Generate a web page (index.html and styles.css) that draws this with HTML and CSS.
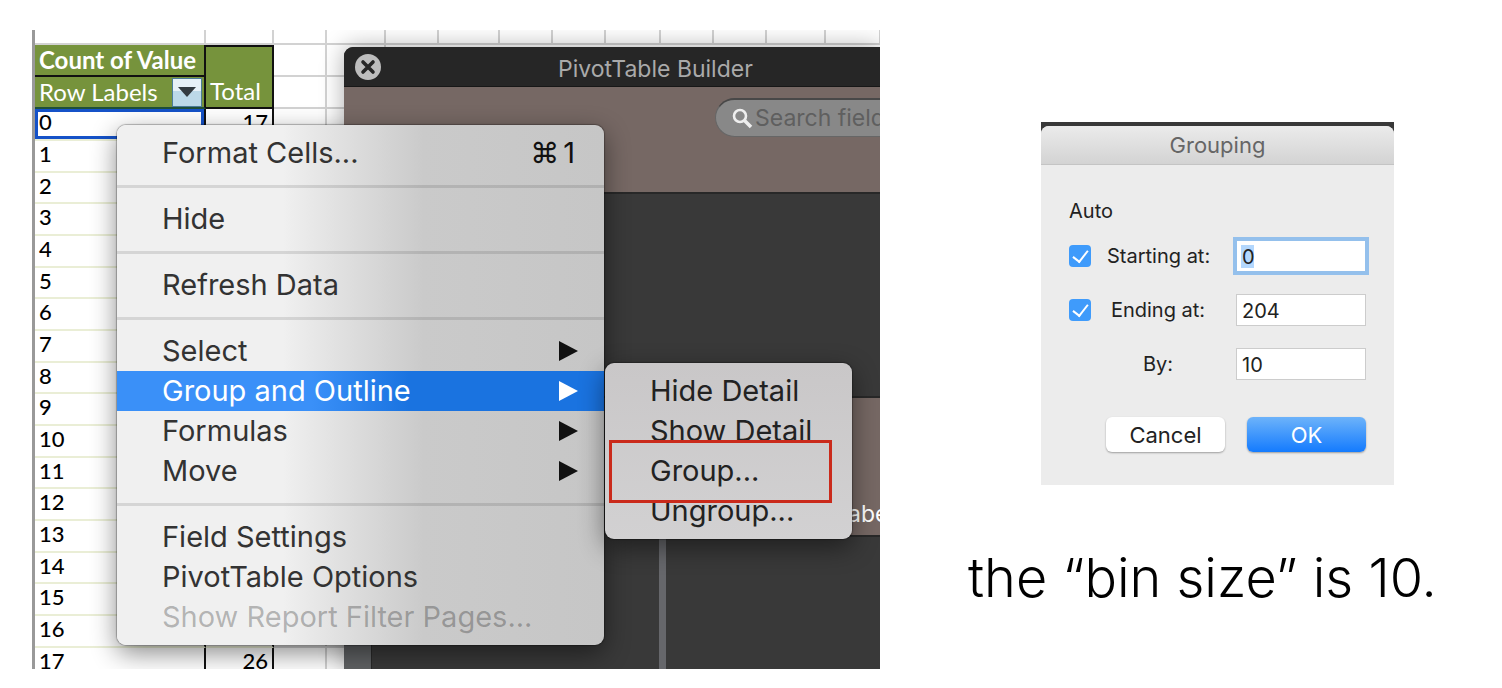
FILE: index.html
```html
<!DOCTYPE html>
<html lang="en">
<head>
<meta charset="utf-8">
<title>PivotTable grouping</title>
<link rel="stylesheet" href="styles.css">
</head>
<body>
<main class="slide">
  <section class="excel">
    <table class="sheet">
      <colgroup>
        <col class="w-labels"><col class="w-total"><col class="w-s"><col class="w-l"><col class="w-s"><col class="w-xl"><col class="w-s"><col class="w-s"><col class="w-m"><col class="w-s"><col class="w-s"><col class="w-l"><col class="w-m">
      </colgroup>
      <thead>
        <tr class="top"><td></td><td></td><td></td><td></td><td></td><td></td><td></td><td></td><td></td><td></td><td></td><td></td><td></td></tr>
        <tr><th class="title" scope="col">Count of Value</th><th class="total" rowspan="2" scope="col">Total</th><td></td><td></td></tr>
        <tr><th class="labels" scope="col"><div class="labels-row">Row Labels<button class="filter" type="button" aria-label="Filter"><svg width="18" height="10" viewBox="0 0 18 10"><path d="M0 0H18L9 10Z" fill="#333b40"/></svg></button></div></th><td></td><td></td></tr>
      </thead>
      <tbody>
        <tr><td class="active">0</td><td>17</td><td></td><td></td></tr>
        <tr><td>1</td><td></td><td></td><td></td></tr>
        <tr><td>2</td><td></td><td></td><td></td></tr>
        <tr><td>3</td><td></td><td></td><td></td></tr>
        <tr><td>4</td><td></td><td></td><td></td></tr>
        <tr><td>5</td><td></td><td></td><td></td></tr>
        <tr><td>6</td><td></td><td></td><td></td></tr>
        <tr><td>7</td><td></td><td></td><td></td></tr>
        <tr><td>8</td><td></td><td></td><td></td></tr>
        <tr><td>9</td><td></td><td></td><td></td></tr>
        <tr><td>10</td><td></td><td></td><td></td></tr>
        <tr><td>11</td><td></td><td></td><td></td></tr>
        <tr><td>12</td><td></td><td></td><td></td></tr>
        <tr><td>13</td><td></td><td></td><td></td></tr>
        <tr><td>14</td><td></td><td></td><td></td></tr>
        <tr><td>15</td><td></td><td></td><td></td></tr>
        <tr><td>16</td><td></td><td></td><td></td></tr>
        <tr><td>17</td><td>26</td><td></td><td></td></tr>
      </tbody>
    </table>

    <div class="builder">
      <header class="builder-head">
        <button class="close" type="button" aria-label="Close"><svg width="26" height="26" viewBox="0 0 26 26"><circle cx="13" cy="13" r="13" fill="#bdbdbd"/><path d="M8 8L18 18M18 8L8 18" stroke="#262626" stroke-width="3.6" stroke-linecap="round"/></svg></button>
        <span class="builder-title">PivotTable Builder</span>
      </header>
      <div class="builder-tools">
        <label class="search"><svg width="22" height="22" viewBox="0 0 22 22" fill="none" stroke="#eee"><circle cx="8" cy="9" r="6" stroke-width="2.6"/><path d="M12.5 13.5L19 20" stroke-width="3.6"/></svg><input type="text" placeholder="Search fields" aria-label="Search fields"></label>
      </div>
      <div class="builder-body">
        <div class="gutter"></div>
        <div class="areas">
          <div class="fields"></div>
          <div class="zones">
            <div class="zone"></div>
            <div class="zone"><div class="zone-head">abe</div></div>
          </div>
        </div>
      </div>
    </div>

    <div class="menu main-menu" role="menu">
      <button type="button" role="menuitem">Format Cells...<kbd>⌘<span>1</span></kbd></button>
      <hr>
      <button type="button" role="menuitem">Hide</button>
      <hr>
      <button type="button" role="menuitem">Refresh Data</button>
      <hr>
      <button type="button" role="menuitem">Select<i class="arrow"></i></button>
      <button type="button" role="menuitem" class="on">Group and Outline<i class="arrow"></i></button>
      <button type="button" role="menuitem">Formulas<i class="arrow"></i></button>
      <button type="button" role="menuitem">Move<i class="arrow"></i></button>
      <hr>
      <button type="button" role="menuitem">Field Settings</button>
      <button type="button" role="menuitem">PivotTable Options</button>
      <button type="button" role="menuitem" disabled>Show Report Filter Pages...</button>
    </div>

    <div class="menu sub-menu" role="menu">
      <button type="button" role="menuitem">Hide Detail</button>
      <button type="button" role="menuitem">Show Detail</button>
      <button type="button" role="menuitem">Group...</button>
      <button type="button" role="menuitem">Ungroup...</button>
      <div class="marker"></div>
    </div>
  </section>

  <section class="side">
    <div class="dialog-shot">
      <form class="dialog">
        <h2>Grouping</h2>
        <div class="dialog-body">
          <div class="auto">Auto</div>
          <div class="field"><input type="checkbox" id="auto-start" checked aria-label="Auto start"><label for="start">Starting at:</label><input class="box focus" type="text" id="start" value="0"></div>
          <div class="field"><input type="checkbox" id="auto-end" checked aria-label="Auto end"><label for="end">Ending at:</label><input class="box" type="text" id="end" value="204"></div>
          <div class="field"><span></span><label for="by">By:</label><input class="box" type="text" id="by" value="10"></div>
          <div class="actions"><button type="button">Cancel</button><button type="button" class="ok">OK</button></div>
        </div>
      </form>
    </div>
    <p class="caption">the “bin size” is 10.</p>
  </section>
</main>
</body>
</html>
```
FILE: styles.css
```css
* { box-sizing: border-box; }
body { margin: 0; background: #fff; font-family: Inter, "Liberation Sans", sans-serif; color: #222; }
button, input { font: inherit; color: inherit; }
.slide { display: grid; grid-template-columns: 848fr 622fr; padding: 30px 0 19px 32px; }

/* Spreadsheet */
.excel { position: relative; height: 639px; overflow: hidden; border-left: 3px solid #999; background: #fff; }
.sheet { table-layout: fixed; width: 844px; border-collapse: separate; border-spacing: 0; font: 500 22px/24px Lato, "Open Sans", sans-serif; color: #000; }
.w-labels { width: 171px; }
.w-total { width: 68px; }
.w-s { width: 53px; }
.w-m { width: 55px; }
.w-l { width: 59px; }
.w-xl { width: 61px; }
.sheet td, .sheet th { height: 32px; padding: 0 4px; border-right: 2px solid #d2d2d2; border-bottom: 2px solid #d2d2d2; text-align: left; vertical-align: middle; white-space: nowrap; }
.sheet .top td { height: 15px; }
.sheet th { background: #76933c; color: #fff; font-size: 24px; }
.sheet .title { height: 31px; border-bottom-color: #111; border-right-color: #111; }
.sheet .labels { padding: 0 2px 0 4px; border-color: #1f4f3a #111 #1f4f3a; font-weight: 400; }
.labels-row { display: flex; align-items: center; justify-content: space-between; }
.filter { display: grid; place-items: center; width: 30px; height: 29px; padding: 0; border: 1px solid #4b7d99; background: linear-gradient(#e7f1f7 45%, #bcd9e8 46%); }
.sheet .total { padding: 0 4px 4px; border-color: #111; border-top: 2px solid #111; vertical-align: bottom; font-weight: 400; }
.sheet tbody td { padding-top: 1px; vertical-align: top; }
.sheet tbody td:nth-child(-n+2) { border-bottom-color: #eaeed6; border-right-color: #111; }
.sheet tbody td:nth-child(2) { text-align: right; }
.sheet tbody tr:nth-child(3n) td { height: 31px; }
.sheet tbody .active { box-shadow: inset 0 0 0 3px #1552c8; }

/* PivotTable Builder window */
.builder { position: absolute; left: 309px; right: 0; top: 17px; bottom: 0; display: flex; flex-direction: column; border-top-left-radius: 9px; overflow: hidden; background: #393939; box-shadow: 0 0 24px #0005; }
.builder-head { display: flex; align-items: center; height: 40px; padding: 0 11px; background: #262626; border-bottom: 1px solid #171717; color: #aaa; }
.close { display: grid; padding: 0; border: 0; background: none; }
.builder-title { margin: 4px 0 0 177px; font-size: 23px; line-height: 28px; white-space: nowrap; }
.builder-tools { display: flex; justify-content: flex-end; height: 107px; padding-top: 11px; background: #766864; border-bottom: 2px solid #282828; }
.search { display: flex; align-items: center; gap: 1px; width: 165px; height: 39px; padding-left: 16px; background: #888; border: 1px solid #666; border-top: 2px solid #484848; border-right: 0; border-radius: 20px 0 0 20px; }
.search svg { flex: none; }
.search input { width: 100%; min-width: 0; padding: 0; border: 0; background: none; font-size: 23px; }
.search input::placeholder { color: #5f5f5f; opacity: 1; }
.builder-body { display: flex; flex: 1; }
.gutter { width: 28px; background: #5f6163; border-right: 1px solid #292929; }
.areas { display: flex; flex: 1; flex-direction: column; }
.fields { height: 204px; border-bottom: 2px solid #282828; }
.zones { display: grid; flex: 1; grid-template-columns: 294px 1fr; }
.zone { min-width: 0; }
.zone:first-child { border-right: 7px solid #66676b; }
.zone-head { display: flex; align-items: flex-end; height: 139px; padding: 0 0 7px 182px; overflow: hidden; background: #766864; border-bottom: 2px solid #282828; color: #fff; font-size: 23px; line-height: 28px; }

/* Menus */
.menu { position: absolute; padding: 8px 0; border-radius: 9px; box-shadow: 0 0 1px 1px #0004, 0 8px 26px #0007; font-size: 29px; }
.menu button { display: flex; align-items: center; justify-content: space-between; width: 100%; height: 40px; padding: 0 26px 0 45px; border: 0; background: none; line-height: 32px; text-align: left; white-space: nowrap; }
.menu button:disabled { color: #0004; }
.menu hr { height: 3px; margin: 12px 0 11px; border: 0; background: #0000001c; }
.menu kbd { display: flex; gap: 4px; padding-right: 3px; font: inherit; color: #111; }
.arrow { border-left: 19px solid #111; border-top: 10px solid transparent; border-bottom: 10px solid transparent; }
.main-menu { left: 82px; top: 95px; width: 487px; color: #333; background: linear-gradient(90deg, #f0f0f0 34%, #dcdcdc 49%, #cacaca 63%, #c6c6c6); }
.main-menu .on { color: #fff; background: linear-gradient(90deg, #3a90f8 40%, #1a73e0 60%); }
.on .arrow { border-left-color: #fff; }
.sub-menu { left: 570px; top: 333px; width: 247px; background: linear-gradient(#c9c7c8, #d2d1d2); }
.marker { position: absolute; left: 4px; top: 77px; width: 223px; height: 63px; border: 3px solid #ca2a1b; }

/* Grouping dialog */
.side { display: flex; flex-direction: column; padding: 92px 0 0 88px; }
.dialog-shot { width: 353px; margin-left: 73px; padding-top: 4px; background: #383838; }
.dialog { border-radius: 8px 8px 0 0; overflow: hidden; background: #ececec; font-size: 20px; }
.dialog h2 { margin: 0; padding: 5px 0 4px; border-bottom: 1px solid #c4c4c4; background: linear-gradient(#ebebeb, #d3d3d3); color: #666; font-size: 22px; font-weight: 400; line-height: 29px; text-align: center; }
.dialog-body { padding: 34px 28px 33px; }
.auto { height: 24px; line-height: 24px; }
.field { display: grid; grid-template-columns: 22px 102px 130px; column-gap: 16px; align-items: center; height: 54px; }
.auto + .field { margin-top: 6px; }
.field label { text-align: center; line-height: 24px; white-space: nowrap; }
.field .box { margin-left: 11px; }
.field [type=checkbox] { appearance: none; display: grid; place-items: center; width: 22px; height: 22px; margin: 0; border-radius: 4px; background: #3f9bfb; }
.field [type=checkbox]::before { content: ""; width: 7px; height: 13px; margin-bottom: 3px; border: solid #fff; border-width: 0 2px 2px 0; transform: rotate(38deg); }
.box { width: 130px; height: 32px; padding: 2px 5px 0; border: 1px solid #ccc; background: #fff; outline: 0; }
.focus { border-color: #94c0ec; box-shadow: 0 0 0 3px #94c0ec; background: linear-gradient(#b3d7fd, #b3d7fd) 4px 4px / 13px 23px no-repeat #fff; }
.actions { display: flex; justify-content: flex-end; gap: 22px; margin-top: 26px; }
.actions button { width: 119px; height: 35px; padding: 0; border: 0; border-radius: 6px; background: #fff; box-shadow: 0 1px 2px #0005; font-size: 22px; line-height: 30px; }
.actions .ok { color: #fff; background: linear-gradient(#6db3fa, #147bfe); }
.caption { margin: 57px 0 0; color: #000; font: 300 54px/72px Inter, "Liberation Sans", sans-serif; white-space: nowrap; }
```
